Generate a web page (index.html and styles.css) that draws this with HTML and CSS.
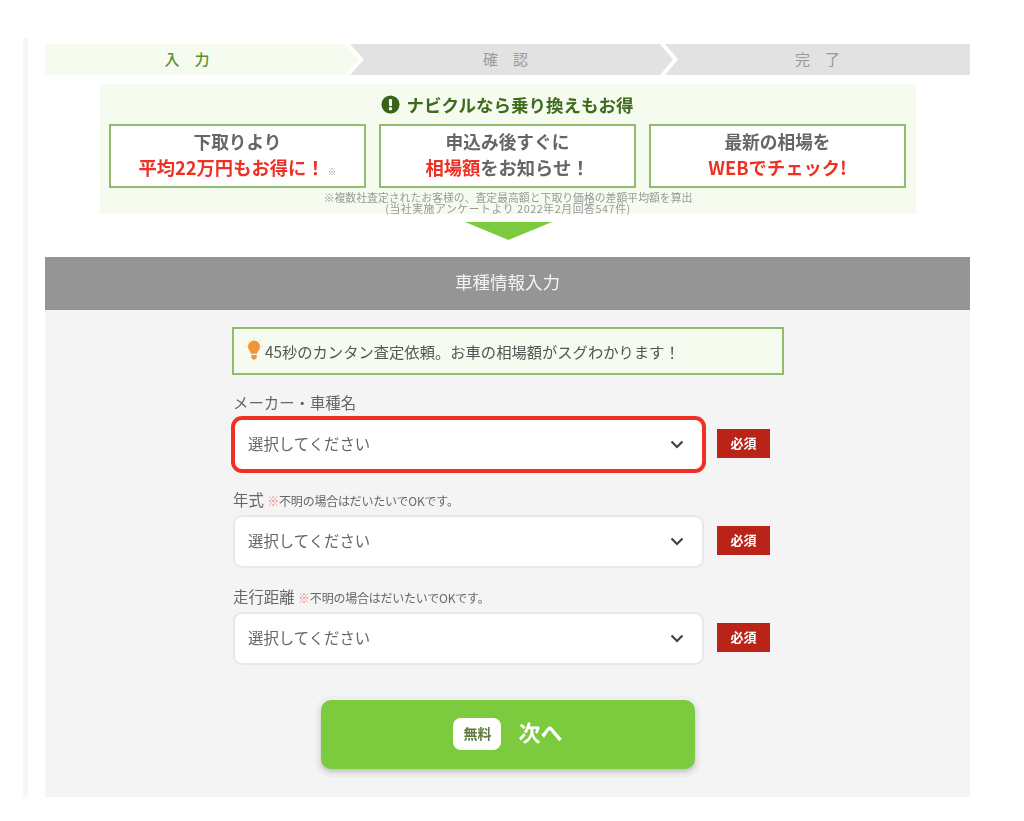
FILE: index.html
```html
<!DOCTYPE html>
<html lang="ja">
<head>
<meta charset="utf-8">
<title>車種情報入力</title>
<link rel="stylesheet" href="styles.css">
</head>
<body>
<main class="page">
  <ol class="steps">
    <li class="step step-first step-active"><span>入　力</span></li>
    <li class="step step-mid"><span>確　認</span></li>
    <li class="step step-last"><span>完　了</span></li>
  </ol>

  <section class="notice">
    <h2 class="notice-title">
      <svg class="notice-icon" viewBox="0 0 20 20" aria-hidden="true">
        <circle cx="10" cy="10" r="9.5" fill="#3a6319"/>
        <rect x="8.4" y="4.2" width="3.2" height="7.6" rx="1.4" fill="#fff"/>
        <circle cx="10" cy="14.4" r="1.8" fill="#fff"/>
      </svg>
      ナビクルなら乗り換えもお得
    </h2>
    <div class="notice-cards">
      <div class="card"><p>下取りより</p><p class="card-strong"><em>平均22万円もお得に！</em><small>※</small></p></div>
      <div class="card"><p>申込み後すぐに</p><p class="card-strong"><em>相場額</em>をお知らせ！</p></div>
      <div class="card"><p>最新の相場を</p><p class="card-strong"><em>WEBでチェック!</em></p></div>
    </div>
    <p class="footnote">※複数社査定されたお客様の、査定最高額と下取り価格の差額平均額を算出<br><span class="footnote-source">(当社実施アンケートより 2022年2月回答547件)</span></p>
  </section>

  <div class="down-arrow"></div>

  <h1 class="section-head">車種情報入力</h1>

  <section class="panel">
    <div class="form">
      <p class="tip">
        <svg class="tip-icon" viewBox="0 0 18 24" aria-hidden="true">
          <g stroke="#fbd9b4" stroke-width="1" stroke-linecap="round">
            <path d="M9 .6v1.6M2.6 3.2l1.1 1.1M15.4 3.2l-1.1 1.1M.6 9.4h1.5M15.9 9.4h1.5"/>
          </g>
          <path d="M9 3.4a6 6 0 0 1 6 6c0 2.500-1.500 3.800-2.300 5.300-.4.800-.5 1.300-.5 2H5.800c0-.7-.1-1.200-.5-2C4.500 13.200 3 11.900 3 9.400a6 6 0 0 1 6-6z" fill="#f0953a"/>
          <path d="M6.200 18h5.600v2.200L10.300 22.500H7.700L6.200 20.200z" fill="#f0953a"/>
        </svg>
        <span>45秒のカンタン査定依頼。お車の相場額がスグわかります！</span>
      </p>

      <div class="field">
        <label class="field-label">メーカー・車種名</label>
        <div class="field-row">
          <div class="select select-error">
            <span class="select-text">選択してください</span>
            <svg class="chevron" viewBox="0 0 14 9" aria-hidden="true"><path d="M1.500 1.500 7 7l5.500-5.500" fill="none" stroke="#404040" stroke-width="2.200"/></svg>
          </div>
          <span class="badge">必須</span>
        </div>
      </div>

      <div class="field">
        <label class="field-label">年式 <small><i>※</i>不明の場合はだいたいでOKです。</small></label>
        <div class="field-row">
          <div class="select">
            <span class="select-text">選択してください</span>
            <svg class="chevron" viewBox="0 0 14 9" aria-hidden="true"><path d="M1.500 1.500 7 7l5.500-5.500" fill="none" stroke="#404040" stroke-width="2.200"/></svg>
          </div>
          <span class="badge">必須</span>
        </div>
      </div>

      <div class="field">
        <label class="field-label">走行距離 <small><i>※</i>不明の場合はだいたいでOKです。</small></label>
        <div class="field-row">
          <div class="select">
            <span class="select-text">選択してください</span>
            <svg class="chevron" viewBox="0 0 14 9" aria-hidden="true"><path d="M1.500 1.500 7 7l5.500-5.500" fill="none" stroke="#404040" stroke-width="2.200"/></svg>
          </div>
          <span class="badge">必須</span>
        </div>
      </div>
    </div>

    <button class="next" type="button"><span class="free">無料</span><span class="next-label">次へ</span></button>
  </section>
</main>
</body>
</html>
```

FILE: styles.css
```css
* { box-sizing: border-box; }

html, body { margin: 0; padding: 0; background: #fff; }

body {
  font-family: "Noto Sans CJK JP", "Noto Sans", sans-serif;
  color: #666;
}

.page {
  width: 947px;
  height: 759px;
  margin: 38px 0 0 23px;
  padding: 6px 0 0 17px;
  border-left: 5px solid #f6f6f9;
  filter: blur(0.5px);
}

/* steps */
.steps {
  display: flex;
  width: 925px;
  height: 31px;
  margin: 0;
  padding: 0;
  list-style: none;
}

.step {
  display: flex;
  align-items: center;
  justify-content: center;
  height: 31px;
  padding-bottom: 2px;
  font-size: 15px;
  line-height: 29px;
  background: #e2e2e2;
  color: #9a9a9a;
}

.step-active { background: #f5fbee; color: #5f8f35; font-weight: 500; }

.step-first {
  width: 314px;
  padding-right: 30px;
  clip-path: polygon(0 0, 300px 0, 314px 50%, 300px 100%, 0 100%);
}

.step-mid {
  width: 323px;
  margin-left: -9px;
  padding-right: 12px;
  clip-path: polygon(0 0, 310px 0, 323px 50%, 310px 100%, 0 100%, 14px 50%);
}

.step-last {
  width: 305px;
  margin-left: -8px;
  clip-path: polygon(0 0, 100% 0, 100% 100%, 0 100%, 13px 50%);
}

/* notice */
.notice {
  width: 816px;
  height: 130px;
  margin: 9px 0 0 55px;
  padding: 9px 9px 0;
  background: #f5fbee;
}

.notice-title {
  display: flex;
  align-items: center;
  justify-content: center;
  gap: 7px;
  height: 24px;
  margin: 0 0 7px;
  padding-bottom: 1px;
  font-size: 17.5px;
  line-height: 23px;
  font-weight: 700;
  color: #3f6a1f;
}

.notice-icon { width: 19px; height: 19px; flex: none; margin-left: -2px; }

.notice-cards {
  display: grid;
  grid-template-columns: repeat(3, 257px);
  gap: 13px;
}

.card {
  height: 64px;
  padding-top: 2px;
  background: #fff;
  border: 2px solid #8fbc6d;
  text-align: center;
  font-weight: 700;
  color: #666;
}

.card p {
  margin: 0;
  font-size: 17.7px;
  line-height: 26px;
}

.card .card-strong { font-size: 18.3px; }

.card em { font-style: normal; color: #ee3124; }

.card small {
  margin-left: 3px;
  font-size: 9px;
  font-weight: 400;
  color: #999;
}

.footnote {
  margin: 4px 0 0;
  font-size: 10.85px;
  line-height: 11px;
  text-align: center;
  color: #999;
}

.footnote-source { letter-spacing: .55px; }

.down-arrow {
  width: 87px;
  height: 18px;
  margin: 8px 0 0 420px;
  background: #7ccb3e;
  clip-path: polygon(0 0, 100% 0, 50% 100%);
}

.section-head {
  height: 53px;
  margin: 17px 0 0;
  background: #959595;
  color: #f4f4f4;
  font-size: 17.5px;
  font-weight: 400;
  line-height: 50px;
  text-align: center;
}

/* panel */
.panel {
  height: 487px;
  padding: 17px 0 0;
  background: #f4f4f4;
}

.form {
  width: 552px;
  margin: 0 0 0 187px;
}

.tip {
  display: flex;
  align-items: center;
  height: 48px;
  margin: 0;
  padding: 0 0 0 11px;
  background: #f5fbee;
  border: 2px solid #8fbc6d;
  font-size: 15.3px;
  color: #555;
}

.tip-icon { width: 18px; height: 24px; flex: none; margin-top: -4px; }

.tip span { margin-left: 2px; }

.field { margin-top: 18px; padding-left: 1px; }

.field:first-of-type { margin-top: 17px; }

.field-label {
  display: block;
  height: 22px;
  margin: 0 0 4px;
  font-size: 15.4px;
  line-height: 20px;
  color: #666;
}

.field-label small {
  font-size: 12px;
  letter-spacing: -.2px;
  color: #666;
}

.field-label i { font-style: normal; color: #f08a80; }

.field-row {
  display: flex;
  align-items: center;
  gap: 13px;
}

.select {
  display: flex;
  align-items: center;
  justify-content: space-between;
  width: 471px;
  height: 53px;
  padding: 0 18px 0 13px;
  background: #fff;
  border: 2px solid #e8e8e8;
  border-radius: 9px;
  font-size: 15.4px;
  color: #666;
}

.select-text { margin-bottom: 4px; }

.select-error {
  border-color: #ee3124;
  box-shadow: 0 0 0 2px #ee3124;
}

.chevron { width: 14px; height: 9px; flex: none; }

.badge {
  display: block;
  width: 53px;
  height: 29px;
  margin-bottom: 3px;
  background: #b92318;
  color: #fff;
  font-size: 13px;
  font-weight: 700;
  line-height: 27px;
  text-align: center;
}

/* button */
.next {
  display: flex;
  align-items: center;
  justify-content: center;
  gap: 17px;
  width: 374px;
  height: 69px;
  margin: 35px 0 0 276px;
  padding: 0 0 2px;
  background: #7ccb3e;
  border: 0;
  border-radius: 10px;
  box-shadow: 0 3px 4px rgba(0, 0, 0, .18), 0 2px 0 6px rgba(0, 0, 0, .025);
  font-family: inherit;
}

.free {
  display: block;
  width: 48px;
  height: 32px;
  background: #fff;
  border-radius: 8px;
  color: #5d7a3c;
  font-size: 14px;
  font-weight: 700;
  line-height: 30px;
  text-align: center;
}

.next-label {
  margin-bottom: 6px;
  color: #fff;
  font-size: 22px;
  font-weight: 700;
  line-height: 32px;
}
```
